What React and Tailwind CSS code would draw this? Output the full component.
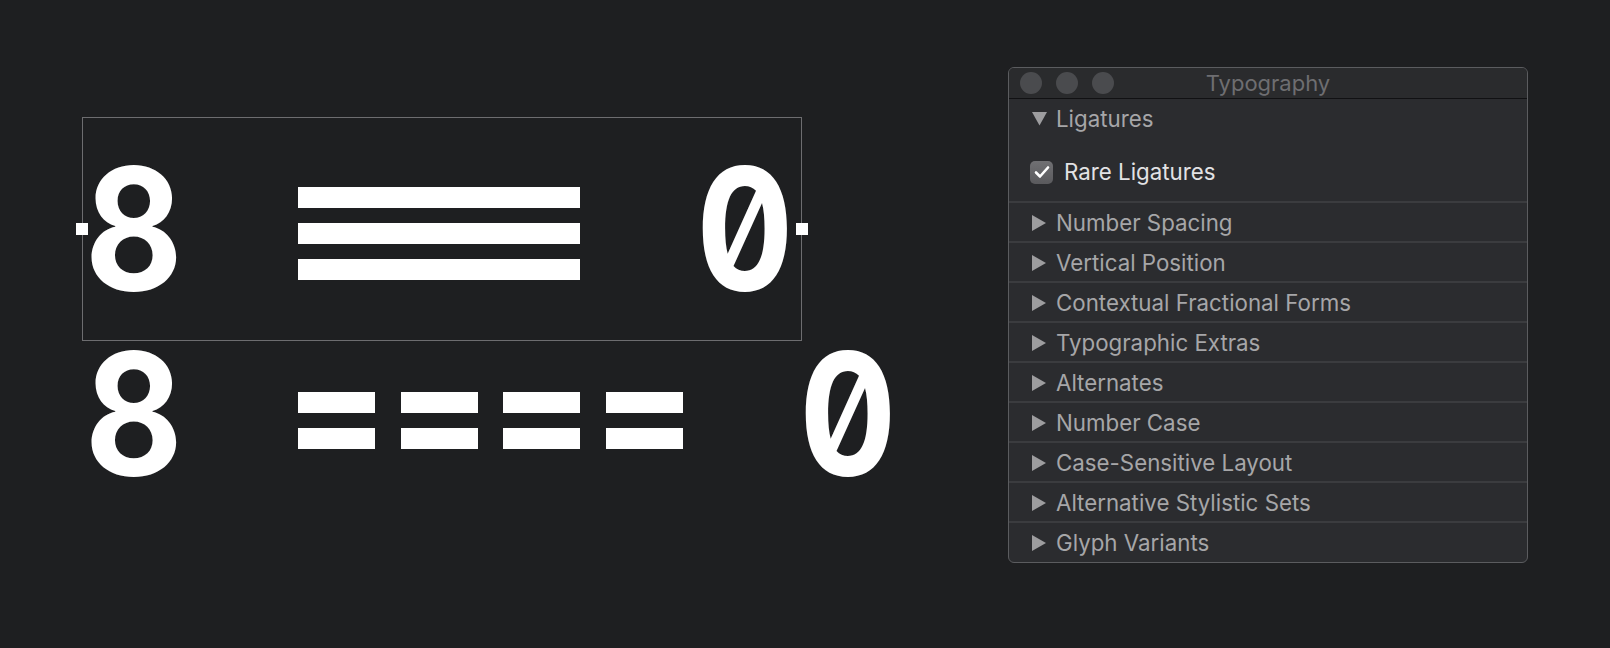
import React from 'react';

const sections = [
  'Number Spacing',
  'Vertical Position',
  'Contextual Fractional Forms',
  'Typographic Extras',
  'Alternates',
  'Number Case',
  'Case-Sensitive Layout',
  'Alternative Stylistic Sets',
  'Glyph Variants',
];

const Digit = ({ children, pad }) => (
  <div className={`w-[102.6px] shrink-0 flex justify-center ${pad}`}>
    <span className="inline-block scale-x-[0.89] font-['Inter',sans-serif] font-bold text-[170px] text-white [font-feature-settings:'zero','tnum']">
      {children}
    </span>
  </div>
);

const Bar = ({ w }) => <div className={`h-[21px] bg-white ${w}`} />;

const RightArrow = () => (
  <svg width="14" height="16" viewBox="0 0 14 16" className="shrink-0">
    <polygon points="0,0 14,8 0,16" fill="#9d9d9f" />
  </svg>
);

const DownArrow = () => (
  <svg width="15" height="14" viewBox="0 0 15 14" className="shrink-0">
    <polygon points="0,0 15,0 7.5,13.5" fill="#9d9d9f" />
  </svg>
);

const TypographyPanel = () => (
  <div className="mt-[67px] w-[520px] h-[496px] rounded-[6px] border border-[#5b5c5f] bg-[#2b2c2f] overflow-hidden font-['Inter',sans-serif]">
    <div className="relative h-[31px] flex items-center border-b border-[#111113] bg-[#2a2b2d]">
      <div className="flex gap-[14px] pl-[11px]">
        <div className="w-[22px] h-[22px] rounded-full bg-[#4a4b4e]" />
        <div className="w-[22px] h-[22px] rounded-full bg-[#4a4b4e]" />
        <div className="w-[22px] h-[22px] rounded-full bg-[#4a4b4e]" />
      </div>
      <div className="absolute inset-0 flex items-center justify-center text-[22px] text-[#6e6e71]">
        Typography
      </div>
    </div>

    <div className="h-[102px]">
      <div className="flex items-center h-[40px] pl-[23px] gap-[9px] text-[22.3px] text-[#a6a6a8]">
        <DownArrow />
        <span>Ligatures</span>
      </div>
      <div className="flex items-center h-[24px] mt-[21px] pl-[21px] gap-[11px]">
        <div className="w-[23px] h-[23px] rounded-[5px] bg-gradient-to-b from-[#707073] to-[#5a5a5d] flex items-center justify-center">
          <svg width="16" height="14" viewBox="0 0 16 14">
            <path d="M2 7.5 L6 11.5 L14 2.5" fill="none" stroke="white" strokeWidth="2.6" strokeLinecap="round" strokeLinejoin="round" />
          </svg>
        </div>
        <span className="text-[22.3px] text-[#e2e2e4]">Rare Ligatures</span>
      </div>
    </div>

    {sections.map((s) => (
      <div key={s} className="flex items-center h-[40px] pt-[2px] pl-[23px] gap-[10px] border-t-2 border-[#3b3c3f] text-[22.3px] text-[#a6a6a8]">
        <RightArrow />
        <span>{s}</span>
      </div>
    ))}
  </div>
);

export default function App() {
  return (
    <div className="w-[1610px] h-[648px] bg-[#1e1f21] flex pl-[82px] overflow-hidden">
      <div className="w-[926px] shrink-0 pt-[117px]">
        <div className="relative w-[720px] h-[224px] border border-[#6d6d70]">
          <div className="flex h-full">
            <div className="pt-[25px] leading-none flex">
              <Digit pad="pr-0">8</Digit>
            </div>
            <div className="w-[102.6px] shrink-0" />
            <div className="w-[307.8px] shrink-0 pt-[69px] pl-[10px] flex flex-col gap-[15px]">
              <Bar w="w-[282px]" />
              <Bar w="w-[282px]" />
              <Bar w="w-[282px]" />
            </div>
            <div className="w-[102.6px] shrink-0" />
            <div className="pt-[25px] leading-none flex">
              <Digit pad="pr-[10px]">0</Digit>
            </div>
          </div>
          <div className="absolute left-[-7px] top-[105px] w-[12px] h-[12px] bg-white" />
          <div className="absolute right-[-7px] top-[105px] w-[12px] h-[12px] bg-white" />
        </div>

        <div className="flex h-[144px] leading-[144px] pl-[1px]">
          <Digit pad="pr-0">8</Digit>
          <div className="w-[102.6px] shrink-0" />
          {[0, 1, 2, 3].map((i) => (
            <div key={i} className="w-[102.6px] shrink-0 pt-[51px] pl-[10px] flex flex-col gap-[15px] leading-none">
              <Bar w="w-[77px]" />
              <Bar w="w-[77px]" />
            </div>
          ))}
          <div className="w-[102.6px] shrink-0" />
          <Digit pad="pr-[9px]">0</Digit>
        </div>
      </div>

      <TypographyPanel />
    </div>
  );
}
